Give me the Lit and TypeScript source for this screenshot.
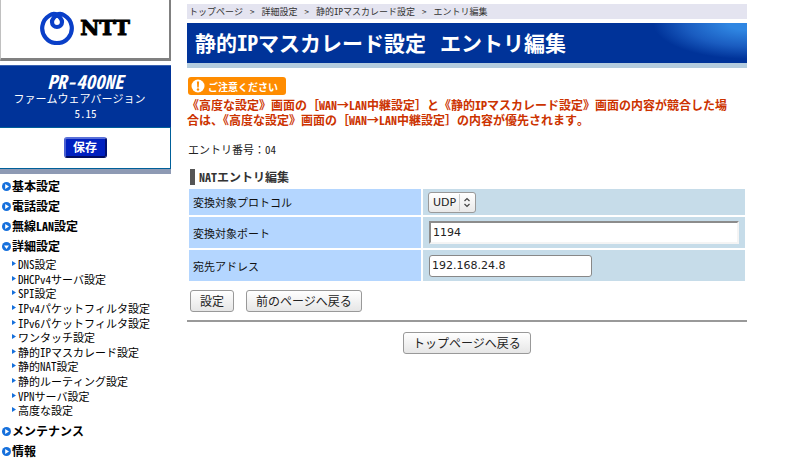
import { LitElement, html, css, svg } from "lit";
import { customElement, state } from "lit/decorators.js";

interface MenuItem {
  label: string;
  open?: boolean;
  children?: string[];
}

const MENU: MenuItem[] = [
  { label: "基本設定" },
  { label: "電話設定" },
  { label: "無線LAN設定" },
  {
    label: "詳細設定",
    open: true,
    children: [
      "DNS設定",
      "DHCPv4サーバ設定",
      "SPI設定",
      "IPv4パケットフィルタ設定",
      "IPv6パケットフィルタ設定",
      "ワンタッチ設定",
      "静的IPマスカレード設定",
      "静的NAT設定",
      "静的ルーティング設定",
      "VPNサーバ設定",
      "高度な設定",
    ],
  },
  { label: "メンテナンス" },
  { label: "情報" },
];

const CRUMBS = ["トップページ", "詳細設定", "静的IPマスカレード設定", "エントリ編集"];

@customElement("router-sidebar")
export class RouterSidebar extends LitElement {
  static styles = css`
    :host { display: block; }
    .logo {
      box-sizing: border-box;
      height: 61px;
      display: flex;
      align-items: center;
      justify-content: center;
      gap: 6px;
      padding-bottom: 2px;
      background: #fff;
      border: solid #c0c0c0;
      border-width: 0 2px 3px 1px;
      border-right-color: #808080;
      border-bottom-color: #808080;
    }
    .logo svg { display: block; }
    .brand {
      font: bold 21px/24px "DejaVu Serif", serif;
      color: #000;
      -webkit-text-stroke: 1px #000;
    }
    .model {
      box-sizing: border-box;
      margin-top: 4px;
      height: 62px;
      padding-top: 4px;
      background: #003399;
      border-top: 1px solid #3a62b0;
      color: #fff;
      text-align: center;
    }
    .name { font-size: 19px; line-height: 21px; font-weight: bold; font-style: italic; }
    .fw { padding-right: 12px; line-height: 15px; font-size: 11px; }
    .ver { font-size: 11px; line-height: 15px; }
    .save {
      box-sizing: border-box;
      height: 42px;
      display: flex;
      align-items: center;
      justify-content: center;
      padding-bottom: 2px;
      border: 1px solid #00609a;
      border-left: 0;
    }
    .save button {
      width: 43px;
      height: 21px;
      padding: 0 0 1px;
      font: bold 12px/16px "Noto Sans Mono CJK JP", "Noto Sans CJK JP", sans-serif;
      color: #fff;
      background: #0020c0;
      border: 2px solid;
      border-color: #5a70d8 #001070 #000c60 #4a60d0;
      border-radius: 3px;
    }
    .bar { height: 5px; background: #8e9ab4; }
    nav { padding: 2px 0 0 2px; }
    ul { list-style: none; margin: 0; padding: 0; }
    a { color: #000; text-decoration: none; display: flex; align-items: center; }
    .top > a { height: 20px; font-weight: bold; font-size: 12px; line-height: 20px; }
    .top svg { flex: none; margin-right: 1px; }
    .sub {
      display: grid;
      grid-auto-rows: 1fr;
      height: 161px;
      padding: 1px 0 3px 10px;
    }
    .sub a { font-size: 11px; line-height: 14px; white-space: nowrap; }
  `;

  private ring(open?: boolean) {
    const arrow = open
      ? svg`<path d="M2 3.400h5L4.500 7z" fill="#fff"/>`
      : svg`<path d="M3.200 2v5L7 4.500z" fill="#fff"/>`;
    return html`<svg width="9" height="9" viewBox="0 0 9 9" aria-hidden="true">
      <circle cx="4.5" cy="4.5" r="4.5" fill="#1670dc" />${arrow}
    </svg>`;
  }

  render() {
    return html`
      <div class="logo">
        <svg width="34" height="34" viewBox="0 0 34 34" fill="none" stroke="#0a3fc8" stroke-width="4.2" aria-hidden="true">
          <path d="M17 4C20 6 22 8 22 11A5 5 0 0 1 12 11C12 8 14 6 17 4C19 2.600 22 2.800 24.500 4.500A14.800 14.800 0 1 1 9.500 4.500C12 2.800 15 2.600 17 4z" />
        </svg>
        <span class="brand">NTT</span>
      </div>
      <div class="model">
        <div class="name">PR-400NE</div>
        <div class="fw">ファームウェアバージョン</div>
        <div class="ver">5.15</div>
      </div>
      <div class="save"><button type="button">保存</button></div>
      <div class="bar"></div>
      <nav>
        <ul>
          ${MENU.map(
            (m) => html`<li class="top">
              <a href="#">${this.ring(m.open)}${m.label}</a>
              ${m.children
                ? html`<ul class="sub">
                    ${m.children.map(
                      (c) => html`<li><a href="#"><svg width="5" height="6" viewBox="0 0 5 6" aria-hidden="true"><path d="M0 0v5l4-2.500z" fill="#1670dc" /></svg>${c}</a></li>`
                    )}
                  </ul>`
                : ""}
            </li>`
          )}
        </ul>
      </nav>
    `;
  }
}

@customElement("entry-editor")
export class EntryEditor extends LitElement {
  @state() private port = "1194";
  @state() private address = "192.168.24.8";

  static styles = css`
    :host { display: block; color: #222; font-size: 11px; }
    .crumbs {
      display: flex;
      gap: 7px;
      height: 15px;
      padding-left: 2px;
      background: #e4e4f0;
      font-size: 9px;
      line-height: 15px;
      color: #333;
    }
    .crumbs a { color: inherit; text-decoration: none; }
    h1 {
      display: flex;
      gap: 14px;
      margin: 4px 0 0;
      height: 40px;
      padding-left: 8px;
      border-bottom: 5px solid #b4ccde;
      font-size: 21px;
      line-height: 38px;
      color: #fff;
      background: radial-gradient(ellipse 94px 36px at 100% 0, #2f86e2 20%, #1a5cc0 65%, #003399 100%) #003399;
      background-clip: padding-box;
    }
    .badge {
      display: flex;
      align-items: center;
      gap: 3px;
      box-sizing: border-box;
      height: 18px;
      width: 98px;
      margin: 9px 0 0 1px;
      padding-left: 3px;
      border-radius: 3px;
      background: #ff8c00;
      color: #fff;
      font-size: 10px;
      font-weight: 900;
      white-space: nowrap;
    }
    .warn {
      margin: 2px 0 0;
      padding-right: 12px;
      font-size: 12px;
      line-height: 15px;
      font-weight: bold;
      color: #cc3300;
    }
    .number { margin: 14px 0 0 1px; line-height: 16px; }
    h2 {
      margin: 12px 0 0 3px;
      padding-left: 4px;
      border-left: 5px solid #555;
      font-size: 12px;
      line-height: 16px;
      color: #333;
    }
    table { width: 100%; margin-top: 2px; border-spacing: 2px; border-collapse: separate; }
    th, td { box-sizing: border-box; padding: 0 6px; text-align: left; }
    th { width: 232px; padding: 0 4px; font-weight: normal; background: #b4d6ff; color: #111; }
    td { background: #c6dce9; }
    tr { height: 31px; }
    tr:first-child { height: 26px; }
    input, select {
      display: block;
      box-sizing: border-box;
      font: 11px/16px "DejaVu Sans", sans-serif;
      color: #222;
      background: #fff;
      margin: 0;
    }
    .port { width: 100%; height: 23px; padding: 0 2px; border: 2px solid #f4f4f4; border-top-color: #8c8c8c; border-left-color: #8c8c8c; }
    .addr { width: 163px; height: 22px; padding: 0 2px; border: 1px solid #888; border-radius: 3px; }
    .pick { position: relative; width: 48px; margin-left: -1px; }
    .pick select {
      appearance: none;
      width: 48px;
      height: 21px;
      padding: 1px 0 0 4px;
      border: 1px solid #999;
      border-radius: 3px;
      background: linear-gradient(#fff, #e9e9e9);
    }
    .pick svg { position: absolute; right: 1px; top: 1px; pointer-events: none; }
    .actions { display: flex; gap: 12px; margin: 7px 0 0 3px; }
    button {
      height: 22px;
      padding: 0 9px;
      border: 1px solid #999;
      border-radius: 3px;
      background: linear-gradient(#fff, #e6e6e6);
      color: #222;
      font: 12px/18px "Noto Sans CJK JP", sans-serif;
    }
    hr { margin: 8px 0 0; border: 0; height: 2px; background: #999; }
    .home { display: flex; justify-content: center; margin-top: 10px; }
  `;

  render() {
    return html`
      <div class="crumbs">
        ${CRUMBS.map((c, i) =>
          i < CRUMBS.length - 1
            ? html`<a href="#">${c}</a><span>&gt;</span>`
            : html`<span>${c}</span>`
        )}
      </div>
      <h1><span>静的IPマスカレード設定</span><span>エントリ編集</span></h1>
      <div class="badge">
        <svg width="14" height="14" viewBox="0 0 14 14" aria-hidden="true">
          <circle cx="7" cy="7" r="6.500" fill="#fff" />
          <path d="M5.900 2.500h2.200L7.700 8.500H6.300z" fill="#ff8c00" />
          <circle cx="7" cy="10.500" r="1.200" fill="#ff8c00" />
        </svg>
        <span>ご注意ください</span>
      </div>
      <p class="warn">《高度な設定》画面の［WAN→LAN中継設定］と《静的IPマスカレード設定》画面の内容が競合した場合は、《高度な設定》画面の［WAN→LAN中継設定］の内容が優先されます。</p>
      <p class="number">エントリ番号：04</p>
      <h2>NATエントリ編集</h2>
      <table>
        <tbody>
          <tr>
            <th scope="row"><label for="proto">変換対象プロトコル</label></th>
            <td>
              <div class="pick">
                <select id="proto">
                  <option selected>UDP</option>
                  <option>TCP</option>
                </select>
                <svg width="16" height="19" viewBox="0 0 16 19" fill="none" aria-hidden="true">
                  <path d="M.5 1v17" stroke="#ccc" />
                  <path d="M5.500 8L8 5.500 10.500 8M5.500 11L8 13.500 10.500 11" stroke="#444" stroke-width="1.200" />
                </svg>
              </div>
            </td>
          </tr>
          <tr>
            <th scope="row"><label for="port">変換対象ポート</label></th>
            <td><input id="port" class="port" type="text" .value=${this.port} @input=${(e: Event) => (this.port = (e.target as HTMLInputElement).value)} /></td>
          </tr>
          <tr>
            <th scope="row"><label for="addr">宛先アドレス</label></th>
            <td><input id="addr" class="addr" type="text" .value=${this.address} @input=${(e: Event) => (this.address = (e.target as HTMLInputElement).value)} /></td>
          </tr>
        </tbody>
      </table>
      <div class="actions">
        <button type="button">設定</button>
        <button type="button">前のページへ戻る</button>
      </div>
      <hr />
      <div class="home"><button type="button">トップページへ戻る</button></div>
    `;
  }
}

@customElement("app-root")
export class AppRoot extends LitElement {
  static styles = css`
    :host {
      display: flex;
      align-items: flex-start;
      gap: 16px;
      background: #fff;
      overflow-x: hidden;
      font-family: "Noto Sans Mono CJK JP", "Noto Sans CJK JP", sans-serif;
    }
    router-sidebar { flex: none; width: 171px; }
    entry-editor { flex: 1; min-width: 0; margin: 4px 53px 0 0; }
  `;

  render() {
    return html`<router-sidebar></router-sidebar><entry-editor></entry-editor>`;
  }
}
